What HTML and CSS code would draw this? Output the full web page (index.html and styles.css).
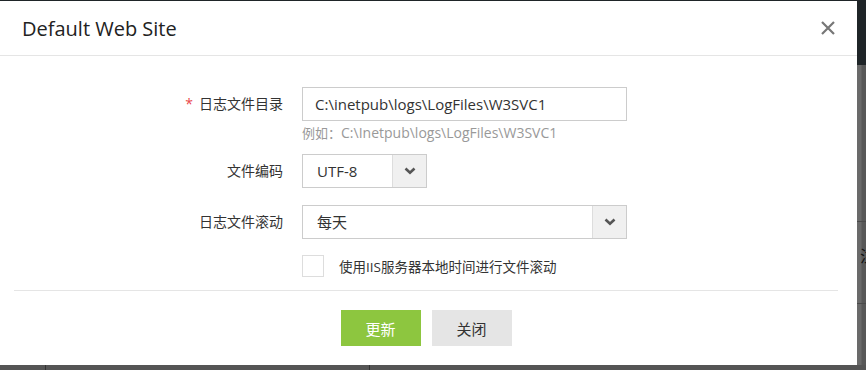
FILE: index.html
```html
<!DOCTYPE html>
<html lang="zh-CN">
  <head>
    <meta charset="UTF-8" />
    <title>Default Web Site</title>
    <link rel="stylesheet" href="styles.css">
  </head>
  <body>
    <div class="backdrop">
      <div class="bg-top"></div>
      <div class="bg-line bg-line-a"></div>
      <div class="bg-line bg-line-b"></div>
      <span class="bg-char">注</span>
      <div class="bg-bottom">
        <span class="bg-sep sep-a"></span>
        <span class="bg-sep sep-b"></span>
      </div>
    </div>

    <div class="modal">
      <div class="modal-header">
        <h4 class="modal-title">Default Web Site</h4>
        <span class="close">
          <svg width="14" height="14" viewBox="0 0 14 14">
            <path d="M1 1 L13 13 M13 1 L1 13" stroke="#777" stroke-width="2.2" fill="none" />
          </svg>
        </span>
      </div>

      <div class="modal-body">
        <div class="form-row row-dir">
          <label class="label"><span class="req">*</span>日志文件目录</label>
          <div class="control">
            <div class="input wide">C:\inetpub\logs\LogFiles\W3SVC1</div>
            <div class="hint">例如：<span class="hint-path">C:\Inetpub\logs\LogFiles\W3SVC1</span></div>
          </div>
        </div>

        <div class="form-row row-enc">
          <label class="label">文件编码</label>
          <div class="control">
            <div class="select narrow">
              <span class="select-text">UTF-8</span>
              <span class="select-arrow">
                <svg width="12" height="8" viewBox="0 0 12 8">
                  <path d="M1.5 1.5 L6 5.8 L10.5 1.5" stroke="#555" stroke-width="2.6" fill="none" />
                </svg>
              </span>
            </div>
          </div>
        </div>

        <div class="form-row row-roll">
          <label class="label">日志文件滚动</label>
          <div class="control">
            <div class="select wide">
              <span class="select-text">每天</span>
              <span class="select-arrow">
                <svg width="12" height="8" viewBox="0 0 12 8">
                  <path d="M1.5 1.5 L6 5.8 L10.5 1.5" stroke="#555" stroke-width="2.6" fill="none" />
                </svg>
              </span>
            </div>
          </div>
        </div>

        <div class="form-row row-check">
          <span class="label"></span>
          <div class="control check">
            <span class="checkbox"></span>
            <span class="check-text">使用IIS服务器本地时间进行文件滚动</span>
          </div>
        </div>
      </div>

      <div class="modal-footer">
        <button class="btn btn-ok">更新</button>
        <button class="btn btn-close">关闭</button>
      </div>
    </div>
  </body>
</html>
```

FILE: styles.css
```css
/* page behind the dialog */
body {
  margin: 0;
  padding: 0;
  width: 866px;
  height: 370px;
  overflow: hidden;
  background-color: #5e5e5e;
  font-family: "Open Sans", "Noto Sans CJK SC", sans-serif;
  color: #333;
}

.backdrop {
  position: absolute;
  left: 0;
  top: 0;
  width: 866px;
  height: 370px;
  background: linear-gradient(to right, #6a6a6a 0, #6a6a6a 861px, #585858 862px);
  overflow: hidden;
}

.bg-top {
  position: absolute;
  left: 0;
  top: 0;
  width: 866px;
  height: 65px;
  background-color: #1f2528;
}

.bg-line {
  position: absolute;
  left: 857px;
  width: 9px;
  height: 1px;
  background-color: #4a4a4a;
}

.bg-line-a {
  top: 221px;
}

.bg-line-b {
  top: 303px;
}

/* glyph of the page behind, cut by the window edge */
.bg-char {
  position: absolute;
  left: 860px;
  top: 243px;
  font-size: 16px;
  color: #111;
}

.bg-bottom {
  position: absolute;
  left: 0;
  top: 365px;
  width: 866px;
  height: 5px;
  background-color: #555;
}

.bg-sep {
  position: absolute;
  top: 0;
  width: 1px;
  height: 5px;
  background-color: #333;
}

.sep-a {
  left: 45px;
}

.sep-b {
  left: 369px;
}

/* dialog */
.modal {
  position: absolute;
  left: 0;
  top: 1px;
  width: 857px;
  height: 364px;
  background-color: #fff;
}

.modal-header {
  height: 54px;
  display: flex;
  align-items: center;
  justify-content: space-between;
  padding: 0 22px 0 22px;
  border-bottom: 1px solid #e5e5e5;
}

.modal-title {
  margin: 0;
  font-size: 20px;
  font-weight: normal;
  color: #222;
}

.close {
  display: flex;
  cursor: pointer;
}

.modal-body {
  padding-top: 31px;
  height: 203px;
}

.form-row {
  display: grid;
  grid-template-columns: 283px 1fr;
  column-gap: 19px;
}

.label {
  text-align: right;
  font-size: 14px;
  line-height: 34px;
  color: #333;
}

.req {
  color: #e9474a;
  margin-right: 6px;
}

.input,
.select {
  box-sizing: border-box;
  height: 34px;
  border: 1px solid #ccc;
  font-size: 15px;
  color: #333;
}

.input {
  padding: 0 12px;
  line-height: 32px;
}

.wide {
  width: 325px;
}

.narrow {
  width: 125px;
}

.hint {
  margin-top: 4px;
  font-size: 13px;
  line-height: 16px;
  color: #999;
}

.hint-path {
  font-size: 14px;
}

.row-enc {
  margin-top: 13px;
}

.row-roll {
  margin-top: 17px;
}

.select {
  display: flex;
}

.select-text {
  flex: 1;
  padding-left: 14px;
  line-height: 32px;
}

.select-arrow {
  width: 33px;
  display: flex;
  align-items: center;
  justify-content: center;
  border-left: 1px solid #ddd;
  background-color: #f0f0f0;
}

.row-check {
  margin-top: 16px;
}

.check {
  display: flex;
  align-items: center;
  height: 21px;
}

.checkbox {
  box-sizing: border-box;
  width: 22px;
  height: 22px;
  border: 1px solid #ddd;
  background-color: #fff;
}

.check-text {
  margin-left: 15px;
  font-size: 13.5px;
}

.modal-footer {
  margin: 0 19px 0 14px;
  border-top: 1px solid #e5e5e5;
  padding-top: 19px;
  display: flex;
  justify-content: center;
  gap: 11px;
}

.btn {
  width: 80px;
  height: 36px;
  border: none;
  font-family: "Open Sans", "Noto Sans CJK SC", sans-serif;
  font-size: 15px;
  cursor: pointer;
}

.btn-ok {
  background-color: #8dc63f;
  color: #fff;
}

.btn-close {
  background-color: #e5e5e5;
  color: #333;
}
```
